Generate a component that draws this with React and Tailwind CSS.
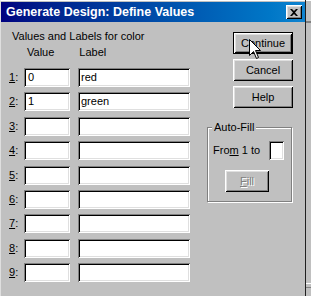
import React from 'react';

const raised = 'bg-[#c0c0c0] shadow-[inset_1px_1px_#ffffff,inset_-1px_-1px_#000000,inset_2px_2px_#dfdfdf,inset_-2px_-2px_#808080]';
const sunken = 'bg-white shadow-[inset_1px_1px_#808080,inset_-1px_-1px_#ffffff,inset_2px_2px_#000000,inset_-2px_-2px_#dfdfdf]';

const rows = [
    { n: '1', value: '0', label: 'red' },
    { n: '2', value: '1', label: 'green' },
    { n: '3', value: '', label: '' },
    { n: '4', value: '', label: '' },
    { n: '5', value: '', label: '' },
    { n: '6', value: '', label: '' },
    { n: '7', value: '', label: '' },
    { n: '8', value: '', label: '' },
    { n: '9', value: '', label: '' },
];

const Cursor = () => (
    <svg className="absolute left-[249px] top-[39px]" width="13" height="21" viewBox="0 0 13 21">
        <path d="M0.5 0.5 L0.5 16.5 L4.5 12.5 L7.5 19.5 L9.5 18.5 L6.5 11.5 L11.5 11.5 Z" fill="#fff" stroke="#000" strokeWidth="1" />
    </svg>
);

const App = () => {
    return (
        <div className="relative w-[311px] h-[296px] overflow-hidden flex bg-[#c0c0c0] font-['Liberation_Sans',Arial,sans-serif] text-[11px] leading-[13px] text-black">
            <div className="w-[305px] flex flex-col border-t border-t-white border-l border-l-[#dfdfdf]">
                <div className="mt-[1px] h-[20px] flex items-center justify-between pl-[5px] pr-[3px] bg-gradient-to-r from-[#000080] to-[#1084d0]">
                    <span className="text-white font-bold text-[12.5px]">Generate Design: Define Values</span>
                    <div className={`${raised} w-[16px] h-[14px] flex items-center justify-center`}>
                        <svg width="8" height="7" viewBox="0 0 8 7">
                            <path d="M0 0h2l2 2 2-2h2L5 3.5 8 7H6L4 5 2 7H0l3-3.5z" fill="#000" />
                        </svg>
                    </div>
                </div>

                <div className="flex">
                    <div className="w-[206px] pl-[8px] pt-[8px]">
                        <div className="pl-[3px]">Values and Labels for color</div>
                        <div className="flex mt-[3px]">
                            <span className="ml-[18px]">Value</span>
                            <span className="ml-[25px]">Label</span>
                        </div>
                        <div className="flex flex-col gap-[5.4px] mt-[9px]">
                            {rows.map((r) => (
                                <div key={r.n} className="flex items-center h-[19px]">
                                    <span className="w-[15px]"><span className="underline">{r.n}</span>:</span>
                                    <div className={`${sunken} w-[46px] h-[19px] pl-[4px] flex items-center`}>{r.value}</div>
                                    <div className={`${sunken} w-[112px] h-[19px] ml-[8px] pl-[3px] flex items-center`}>{r.label}</div>
                                </div>
                            ))}
                        </div>
                    </div>

                    <div className="w-[86px] pt-[10px]">
                        <div className="ml-[26px] flex flex-col gap-[5px]">
                            <div className="w-[60px] h-[22px] border border-black">
                                <div className={`${raised} w-full h-full flex items-center justify-center`}>Continue</div>
                            </div>
                            <div className={`${raised} w-[60px] h-[22px] flex items-center justify-center`}>Cancel</div>
                            <div className={`${raised} w-[60px] h-[22px] flex items-center justify-center`}>Help</div>
                        </div>

                        <div className="relative mt-[19px] h-[75px] w-[85px] border border-[#808080] shadow-[inset_1px_1px_#ffffff,1px_1px_#ffffff]">
                            <span className="absolute left-[4px] top-[-7px] bg-[#c0c0c0] px-[2px]">Auto-Fill</span>
                            <div className="flex items-center mt-[13px] pl-[5px]">
                                <span>Fro<span className="underline">m</span> 1 to</span>
                                <div className={`${sunken} ml-auto mr-[7px] w-[15px] h-[19px]`}></div>
                            </div>
                            <div className={`${raised} ml-[17px] mt-[10px] w-[44px] h-[22px] flex items-center justify-center text-[#808080] [text-shadow:1px_1px_#ffffff]`}>
                                <span><span className="underline">F</span>ill</span>
                            </div>
                        </div>
                    </div>
                </div>
            </div>
            <div className="w-[1px] bg-[#202020]"></div>
            <div className="flex-1 flex flex-col">
                <div className="h-[1px] bg-white"></div>
                <div className="mt-[20px] h-[2px] bg-[#808080]"></div>
                <div className="mt-[260px] h-[1px] bg-white"></div>
                <div className="mt-[3px] h-[1px] bg-[#808080]"></div>
            </div>
            <Cursor />
        </div>
    );
};

export default App;
